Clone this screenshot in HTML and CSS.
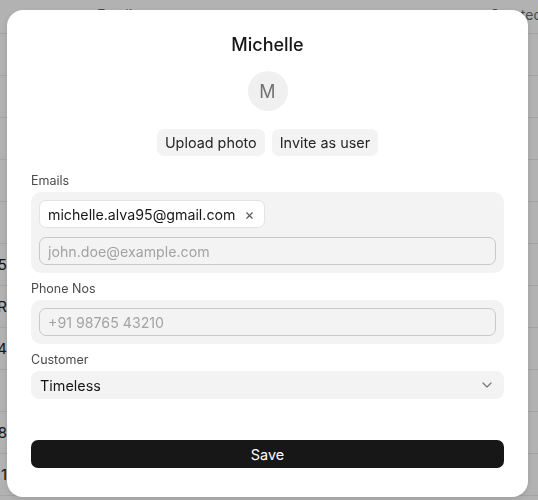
FILE: index.html
```html
<!DOCTYPE html>
<html lang="en">
<head>
    <meta charset="UTF-8">
    <meta name="viewport" content="width=device-width, initial-scale=1.0">
    <title>Contact</title>
    <link rel="stylesheet" href="styles.css">
</head>

<body>
    <!-- list behind the dialog -->
    <div class="list">
        <div class="list-head">
            <span class="col-first"></span>
            <span class="col-email">Email</span>
            <span class="col-created">Created</span>
        </div>
        <div class="list-row"><span class="col-first"></span></div>
        <div class="list-row"><span class="col-first"></span></div>
        <div class="list-row"><span class="col-first"></span></div>
        <div class="list-row"><span class="col-first"></span></div>
        <div class="list-row"><span class="col-first"></span></div>
        <div class="list-row"><span class="col-first">2025</span></div>
        <div class="list-row"><span class="col-first">BR</span></div>
        <div class="list-row"><span class="col-first">'/4</span></div>
        <div class="list-row"><span class="col-first"></span></div>
        <div class="list-row"><span class="col-first">98</span></div>
        <div class="list-row"><span class="col-first">21</span></div>
    </div>

    <div class="backdrop"></div>

    <!-- contact dialog -->
    <div class="dialog">
        <h2 class="dialog-title">Michelle</h2>
        <div class="avatar">M</div>
        <div class="actions">
            <button class="soft-button">Upload photo</button>
            <button class="soft-button">Invite as user</button>
        </div>

        <div class="field">
            <label class="field-label">Emails</label>
            <div class="field-box">
                <div class="chips">
                    <span class="chip">michelle.alva95@gmail.com <span class="chip-x">&times;</span></span>
                </div>
                <input class="text-input" type="text" placeholder="john.doe@example.com">
            </div>
        </div>

        <div class="field">
            <label class="field-label">Phone Nos</label>
            <div class="field-box">
                <input class="text-input" type="text" placeholder="+91 98765 43210">
            </div>
        </div>

        <div class="field">
            <label class="field-label">Customer</label>
            <div class="select">
                <span>Timeless</span>
                <svg width="16" height="16" viewBox="0 0 16 16" fill="none">
                    <path d="M4 6l4 4 4-4" stroke="#777" stroke-width="1.2" stroke-linecap="round" stroke-linejoin="round"/>
                </svg>
            </div>
        </div>

        <button class="save-button">Save</button>
    </div>
</body>
</html>
```

FILE: styles.css
```css
body {
    margin: 0;
    font-family: 'Inter', 'Liberation Sans', sans-serif;
    background-color: #ffffff;
    color: #171717;
    overflow: hidden;
}

/* list behind */
.list {
    display: flex;
    flex-direction: column;
}

.list-head {
    display: flex;
    align-items: center;
    height: 33px;
    border-bottom: 1px solid #ececec;
    font-size: 14px;
    color: #6b6b6b;
}

.list-row {
    display: flex;
    align-items: center;
    height: 41px;
    border-bottom: 1px solid #ececec;
    font-size: 15px;
    color: #222;
}

.col-first {
    display: flex;
    justify-content: flex-end;
    width: 7px;
    overflow: hidden;
    white-space: nowrap;
}

.col-email {
    margin-left: 90px;
    margin-top: -4px;
}

.col-created {
    margin-left: auto;
    margin-right: -4px;
    margin-top: -4px;
}

.backdrop {
    position: fixed;
    inset: 0;
    background-color: rgba(0, 0, 0, 0.3);
}

/* dialog */
.dialog {
    position: fixed;
    left: 7px;
    top: 10px;
    width: 521px;
    height: 487px;
    box-sizing: border-box;
    padding: 24px 24px 0 24px;
    background-color: #ffffff;
    border-radius: 16px;
    box-shadow: 0 2px 6px rgba(0, 0, 0, 0.12);
    display: flex;
    flex-direction: column;
}

.dialog-title {
    margin: 0;
    text-align: center;
    font-size: 18px;
    font-weight: 500;
    line-height: 22px;
    color: #171717;
}

.avatar {
    align-self: center;
    width: 40px;
    height: 40px;
    margin-top: 15px;
    border-radius: 50%;
    background-color: #f0f0f0;
    color: #727272;
    font-size: 18px;
    display: flex;
    align-items: center;
    justify-content: center;
}

.actions {
    display: flex;
    justify-content: center;
    gap: 7px;
    margin-top: 18px;
}

.soft-button {
    height: 27px;
    padding: 0 8px;
    font-family: inherit;
    font-size: 14.4px;
    color: #262626;
    background-color: #f3f3f3;
    border: none;
    border-radius: 7px;
}

.field {
    display: flex;
    flex-direction: column;
    margin-top: 8px;
}

.actions + .field {
    margin-top: 17px;
}

.field-label {
    font-size: 12.5px;
    line-height: 16px;
    color: #4a4a4a;
    margin-bottom: 3px;
}

.field-box {
    display: flex;
    flex-direction: column;
    gap: 9px;
    padding: 8px;
    background-color: #f3f3f3;
    border-radius: 10px;
}

.chips {
    display: flex;
}

.chip {
    display: flex;
    align-items: center;
    gap: 9px;
    height: 28px;
    box-sizing: border-box;
    padding: 0 10px 0 8px;
    font-size: 14.2px;
    color: #171717;
    background-color: #ffffff;
    border: 1px solid #e3e3e3;
    border-radius: 7px;
}

.chip-x {
    font-size: 15px;
    color: #555;
}

.text-input {
    height: 28px;
    box-sizing: border-box;
    padding: 0 8px;
    font-family: inherit;
    font-size: 14.2px;
    color: #171717;
    background-color: #f3f3f3;
    border: 1px solid #c9c9c9;
    border-radius: 7px;
    outline: none;
}

.text-input::placeholder {
    color: #a3a3a3;
}

.select {
    display: flex;
    align-items: center;
    justify-content: space-between;
    height: 28px;
    padding: 0 9px;
    font-size: 14.4px;
    color: #171717;
    background-color: #f3f3f3;
    border-radius: 8px;
}

.save-button {
    margin-top: 41px;
    height: 28px;
    font-family: inherit;
    font-size: 14.4px;
    color: #ffffff;
    background-color: #171717;
    border: none;
    border-radius: 7px;
}
```
